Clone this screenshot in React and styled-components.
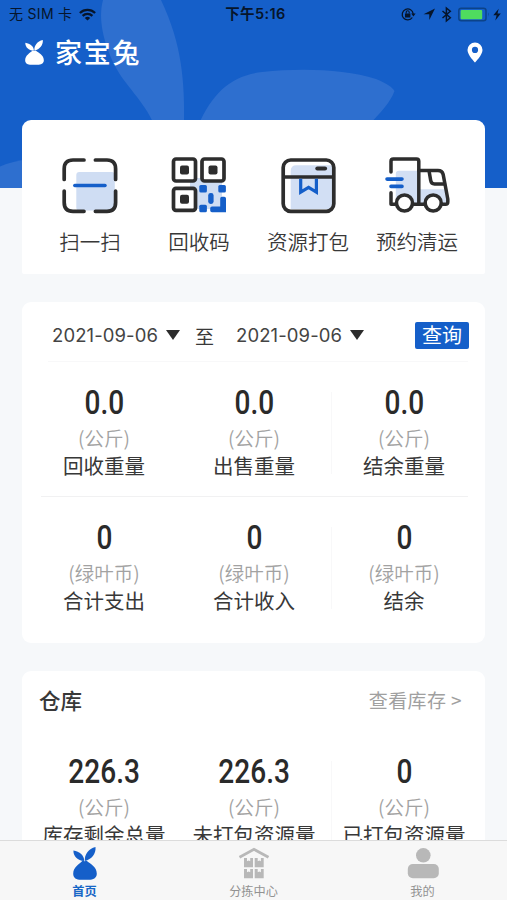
import styled, { createGlobalStyle } from 'styled-components';

const GlobalStyle = createGlobalStyle`
  * {
    box-sizing: border-box;
  }

  body {
    margin: 0;
    font-family: "Noto Sans CJK SC", sans-serif;
    color: #383838;
  }
`;

const Page = styled.div`
  display: flex;
  flex-direction: column;
  width: 507px;
  height: 900px;
  overflow: hidden;
  background: #f6f8fa;
`;

const Content = styled.main`
  flex: 1;
  min-height: 0;
  overflow: hidden;
`;

const Hero = styled.header`
  position: relative;
  height: 188px;
  background: #155fc9;
`;

const HeroLeaves = styled.svg`
  position: absolute;
  inset: 0;
`;

const StatusBar = styled.div`
  position: relative;
  display: grid;
  grid-template-columns: 1fr auto 1fr;
  align-items: center;
  height: 28px;
  padding: 0 5px 0 9px;
  font-family: Inter, "Noto Sans CJK SC", sans-serif;
  font-size: 14px;
  line-height: 20px;
  color: #06152b;
`;

const Carrier = styled.div`
  display: flex;
  align-items: center;
  gap: 7px;
  letter-spacing: 0.3px;
`;

const Clock = styled.div`
  font-size: 14.5px;
  font-weight: 600;
  letter-spacing: 0.4px;
`;

const StatusIcons = styled.svg`
  justify-self: end;
`;

const TitleBar = styled.div`
  position: relative;
  display: flex;
  align-items: center;
  height: 48px;
  padding: 0 24px 0 25px;
  color: #fff;
`;

const BrandName = styled.h1`
  flex: 1;
  margin: 0 0 0 11px;
  font-size: 27px;
  font-weight: 500;
  line-height: 32px;
  letter-spacing: 1.8px;
`;

const Cards = styled.div`
  position: relative;
  display: flex;
  flex-direction: column;
  gap: 28px;
  margin-top: -68px;
  padding: 0 22px;
`;

const Card = styled.section`
  flex-shrink: 0;
  height: ${({ $height }) => $height}px;
  padding: 0 7px;
  border-radius: ${({ $radius }) => $radius || '9px'};
  background: #fff;
`;

const Actions = styled.div`
  display: grid;
  grid-template-columns: repeat(4, 109px);
  justify-content: center;
  padding-top: 32px;
`;

const Action = styled.div`
  display: flex;
  flex-direction: column;
  align-items: center;
  gap: 8px;
  font-size: 20.5px;
  font-weight: 350;
  line-height: 30px;
`;

const FilterRow = styled.div`
  display: flex;
  align-items: center;
  height: 60px;
  margin: 0 10px 0 19px;
  padding: 7px 0 0 4px;
  border-bottom: 1px solid #f8f8f9;
  font-size: 19px;
`;

const DatePick = styled.span`
  display: flex;
  align-items: center;
  gap: 8px;
  width: 128px;
  font-family: Inter, sans-serif;
  font-size: 18.5px;
  letter-spacing: 0.1px;
  color: #444;
  white-space: nowrap;

  &::after {
    content: "";
    border: 7px solid transparent;
    border-top: 10px solid #2c2c2c;
    border-bottom: 0;
  }
`;

const DateText = styled.span`
  width: 106px;
`;

const Until = styled.span`
  margin: 0 22px 0 15px;
`;

const QueryButton = styled.button`
  width: 54px;
  height: 27px;
  margin: 0 -1px 0 auto;
  padding: 0;
  border: 0;
  border-radius: 2px;
  background: #155fc9;
  color: #fff;
  font: 20px/26px "Noto Sans CJK SC", sans-serif;
`;

const StatRow = styled.div`
  position: relative;
  display: grid;
  grid-template-columns: repeat(3, 150px);
  height: 135px;
  padding-top: 22px;
`;

const RowLine = styled.hr`
  height: 1px;
  margin: -1px 10px 0 12px;
  border: 0;
  background: #f1f1f2;
`;

const Stat = styled.div`
  display: flex;
  flex-direction: column;
  align-items: center;
  height: 94px;
  white-space: nowrap;

  &:last-child {
    background: linear-gradient(#f8f8f9, #f8f8f9) 2px 8px / 1px 82px no-repeat;
  }
`;

const StatValue = styled.strong`
  font-family: Roboto, sans-serif;
  font-size: 33px;
  font-weight: 550;
  line-height: 38px;
  color: #2a2a2a;
  transform: scaleX(0.85);
`;

const StatUnit = styled.span`
  font-size: 19.5px;
  font-weight: 350;
  line-height: 31px;
  color: #a2a2a2;
`;

const StatLabel = styled.span`
  font-size: 20.5px;
  line-height: 24px;
`;

const SectionHead = styled.div`
  display: flex;
  align-items: center;
  justify-content: space-between;
  height: 60px;
  margin: 0 10px;
  padding: 0 6px 3px 0;
`;

const SectionTitle = styled.h2`
  margin: 0;
  font-size: 21.5px;
  font-weight: 500;
`;

const MoreLink = styled.span`
  font-size: 19px;
  letter-spacing: 0.4px;
  color: #a0a0a0;
`;

const TabBar = styled.nav`
  display: grid;
  grid-template-columns: repeat(3, 1fr);
  height: 60px;
  border-top: 1px solid #dcdcdc;
  background: #f7f7f7;
`;

const Tab = styled.div`
  display: flex;
  flex-direction: column;
  align-items: center;
  justify-content: space-between;
  padding: 6px 0 0;
  font-size: 12.2px;
  font-weight: ${({ $active }) => ($active ? 700 : 400)};
  line-height: 17px;
  color: ${({ $active }) => ($active ? '#1767c6' : '#929292')};
`;

const Rabbit = ({ width, height, color }) => (
  <svg width={width} height={height} viewBox="0 0 24 33" preserveAspectRatio="none" fill={color}>
    <path d="M.4 3.5C6.5 4.600 11.4 8.5 11.2 14 4.5 13.5 .3 9.5 .4 3.5Z" />
    <path d="M22.5 0C23.2 6.5 18.5 12.5 11.9 14 11.2 7.5 15.5 1.7 22.5 0Z" />
    <path d="M9.5 13.8Q11.7 14.6 13.7 13.8C17 17 23.8 19.5 23.8 26.7 23.8 31 20 32.8 16 32.8H8C3.5 32.8 .2 31 .2 26.7 .2 20 6.5 17 9.5 13.8Z" />
  </svg>
);

const WifiIcon = () => (
  <svg width="17" height="13" viewBox="0 0 17 13" fill="none" stroke="currentColor" strokeWidth="2.3">
    <path d="M.9 5C5.2.9 11.8.9 16.1 5M3.6 7.8c2.8-2.6 7-2.6 9.8 0" />
    <path d="M8.5 12.6 5.8 9.9q2.7-2.1 5.4 0Z" fill="currentColor" stroke="none" />
  </svg>
);

const ScanIcon = () => (
  <svg width="66" height="66" viewBox="57 152 66 66" fill="none" strokeLinecap="round">
    <rect x="76.3" y="172" width="38.5" height="38.5" rx="3" fill="#cfddf3" />
    <path
      d="M84 160H73q-8.8 0-8.8 8.8V179.5M95.4 160H107q8.6 0 8.6 8.8V179.5M64.2 191V202.5q0 8.8 8.8 8.8H84M115.6 191V202.5q0 8.8-8.6 8.8H95.4"
      stroke="#2d2d2d"
      strokeWidth="3.7"
    />
    <path d="M74.8 185.6H105" stroke="#155fc9" strokeWidth="3.5" />
  </svg>
);

const CodeIcon = () => (
  <svg width="66" height="66" viewBox="166 152 66 66">
    <rect x="190" y="178" width="32" height="31" rx="4" fill="#cfddf3" />
    <g fill="#fff" stroke="#2d2d2d" strokeWidth="3.7">
      <rect x="173.5" y="159" width="22" height="22" rx="2.5" />
      <rect x="202" y="159" width="22" height="22" rx="2.5" />
      <rect x="173.5" y="188.3" width="22" height="22" rx="2.5" />
    </g>
    <g fill="#2d2d2d">
      <rect x="180" y="165.6" width="9" height="9" rx="2" />
      <rect x="208.5" y="165.6" width="9" height="9" rx="2" />
      <rect x="180" y="194.7" width="9" height="9" rx="2" />
    </g>
    <g fill="#155fc9">
      <rect x="199.3" y="185" width="7.6" height="7.6" rx="1.5" />
      <rect x="218.3" y="185" width="7.6" height="7.6" rx="1.5" />
      <rect x="208.2" y="193" width="5.4" height="11" rx="2.4" />
      <rect x="199.3" y="204.7" width="7.6" height="7.6" rx="1.5" />
      <path d="M222 196.7h2.2q1.8 0 1.8 1.8V212.3H212q-1.8 0-1.8-1.8v-2.2q0-1.8 1.8-1.8H220.2V198.5q0-1.8 1.8-1.8Z" />
    </g>
  </svg>
);

const PackageIcon = () => (
  <svg width="66" height="66" viewBox="275 152 66 66" fill="none">
    <path d="M290.7 209V171q0-5.7 5.7-5.7H332V209Z" fill="#d2dff4" />
    <rect x="283.2" y="160" width="50.6" height="51.3" rx="7.5" stroke="#2d2d2d" strokeWidth="3.7" />
    <path d="M283 177H334" stroke="#2d2d2d" strokeWidth="3.4" />
    <path d="M317.4 168.5H325" stroke="#2d2d2d" strokeWidth="4.2" strokeLinecap="round" />
    <path d="M300.7 178.7V192.2L308.6 187.4 316.4 192.2V178.7" stroke="#155fc9" strokeWidth="3.2" />
  </svg>
);

const TruckIcon = () => (
  <svg width="68" height="66" viewBox="383.5 152 68 66" fill="none" strokeLinecap="round" strokeLinejoin="round">
    <path d="M396.3 204V174q0-3.3 3.3-3.3H418V189.3H446L448 204Z" fill="#d2dff4" />
    <g stroke="#2d2d2d" strokeWidth="3.5">
      <path d="M391.5 172V161.3q0-2.3 2.3-2.3H417q2.3 0 2.3 2.3V204M391.5 192.7V204.3H396" />
      <path d="M419.3 170.5H438.5Q442.6 170.5 443.6 174.2L448.3 199V202Q448.3 204.3 446 204.3H443M414 204.3H425" />
      <path d="M429.6 171.2 431.2 180.5Q431.8 183.9 435 183.9H445" />
      <circle cx="405" cy="203" r="8" fill="#fff" />
      <circle cx="433.7" cy="203" r="8" fill="#fff" />
    </g>
    <path d="M387.5 179.1H402.5M391.5 186.4H402.5" stroke="#155fc9" strokeWidth="3.6" />
  </svg>
);

const WarehouseIcon = () => (
  <svg width="32" height="32" viewBox="238 847 32 32" fill="#b8b8b8">
    <path d="M239.5 857.3 254 849.4 268.5 857.3" fill="none" stroke="#b8b8b8" strokeWidth="2.7" />
    <path d="M244 858h3v3.3l1.6-.8 1.6.8V858h2.8v9.2h-9ZM254.7 858h3v3.3l1.6-.8 1.6.8V858h2.8v9.2h-9ZM244 869h3v3.3l1.6-.8 1.6.8V869h2.8v9.2h-9ZM254.7 869h3v3.3l1.6-.8 1.6.8V869h2.8v9.2h-9Z" />
  </svg>
);

const MineIcon = () => (
  <svg width="32" height="32" viewBox="0 0 32 32" fill="#b8b8b8">
    <circle cx="16.3" cy="8.3" r="7.3" />
    <rect x=".8" y="17" width="31" height="14.3" rx="5" />
  </svg>
);

const actions = [
  { label: '扫一扫', Icon: ScanIcon },
  { label: '回收码', Icon: CodeIcon },
  { label: '资源打包', Icon: PackageIcon },
  { label: '预约清运', Icon: TruckIcon },
];

const weights = [
  { value: '0.0', unit: '(公斤)', label: '回收重量' },
  { value: '0.0', unit: '(公斤)', label: '出售重量' },
  { value: '0.0', unit: '(公斤)', label: '结余重量' },
];

const coins = [
  { value: '0', unit: '(绿叶币)', label: '合计支出' },
  { value: '0', unit: '(绿叶币)', label: '合计收入' },
  { value: '0', unit: '(绿叶币)', label: '结余' },
];

const stock = [
  { value: '226.3', unit: '(公斤)', label: '库存剩余总量' },
  { value: '226.3', unit: '(公斤)', label: '未打包资源量' },
  { value: '0', unit: '(公斤)', label: '已打包资源量' },
];

const Stats = ({ items }) => (
  <StatRow>
    {items.map(({ value, unit, label }) => (
      <Stat key={label}>
        <StatValue>{value}</StatValue>
        <StatUnit>{unit}</StatUnit>
        <StatLabel>{label}</StatLabel>
      </Stat>
    ))}
  </StatRow>
);

const Header = () => (
  <Hero>
    <HeroLeaves width="507" height="188" viewBox="0 0 507 188" fill="#2e6fcf">
      <path d="M103 0C98 18 103 42 115 66 126 87 142 98 155 126H184C185 82 182 44 161 0Z" />
      <path d="M198 126C213 92 231 76 262 72 300 68 345 69 376 79 388 84 392 87 394.5 91 390 103 381 112 368 126Z" />
      <path d="M0 166.5Q12 161 30 159V188H0Z" />
    </HeroLeaves>
    <StatusBar>
      <Carrier>
        无 SIM 卡
        <WifiIcon />
      </Carrier>
      <Clock>下午5:16</Clock>
      <StatusIcons width="102" height="18" viewBox="400 4 102 18" fill="none" stroke="currentColor">
        <path d="M412.3 16.5A5.5 5.5 0 1 1 413.2 13" strokeWidth="1.3" />
        <path d="M411.2 12.6H415.6L413.4 15.5Z" fill="currentColor" stroke="none" />
        <rect x="405" y="12.5" width="5.4" height="4" fill="currentColor" stroke="none" />
        <path d="M406.2 12.5V11.3a1.5 1.5 0 0 1 3 0V12.5" strokeWidth="1.1" />
        <path d="M435 7.5 423.5 13.2H429.3V19Z" fill="currentColor" stroke="none" />
        <path d="M442.5 10 450.3 16.8 446.4 20V7L450.3 10.3 442.5 17" strokeWidth="1.5" />
        <rect x="458.8" y="7.3" width="27.2" height="12.5" rx="2.5" stroke="#0c4389" strokeWidth="1.5" />
        <rect x="460.6" y="9" width="21.6" height="9.2" rx="1" fill="#4fdc5f" stroke="none" />
        <path d="M488 11.3q1.8 2.2 0 4.5Z" fill="#0c4389" stroke="none" />
        <path d="M498.7 7.8 493.3 14.3H496.6L495.3 19.5 500.8 12.5H497.5Z" fill="currentColor" stroke="none" />
      </StatusIcons>
    </StatusBar>
    <TitleBar>
      <Rabbit width={19} height={25} color="#fff" />
      <BrandName>家宝兔</BrandName>
      <svg width="16" height="21" viewBox="0 0 16 21" fill="#fff">
        <path fillRule="evenodd" d="M8 .5A7.5 7.5 0 0 0 .5 8C.5 13 8 20.5 8 20.5S15.5 13 15.5 8A7.5 7.5 0 0 0 8 .5ZM8 4.8a3.1 3.1 0 1 1 0 6.2a3.1 3.1 0 0 1 0-6.2Z" />
      </svg>
    </TitleBar>
  </Hero>
);

const App = () => (
  <Page>
    <GlobalStyle />
    <Content>
      <Header />
      <Cards>
        <Card $height={154} $radius="9px 9px 2px 2px">
          <Actions>
            {actions.map(({ label, Icon }) => (
              <Action key={label}>
                <Icon />
                {label}
              </Action>
            ))}
          </Actions>
        </Card>
        <Card $height={341}>
          <FilterRow>
            <DatePick>
              <DateText>2021-09-06</DateText>
            </DatePick>
            <Until>至</Until>
            <DatePick>
              <DateText>2021-09-06</DateText>
            </DatePick>
            <QueryButton>查询</QueryButton>
          </FilterRow>
          <Stats items={weights} />
          <RowLine />
          <Stats items={coins} />
        </Card>
        <Card $height={240}>
          <SectionHead>
            <SectionTitle>仓库</SectionTitle>
            <MoreLink>查看库存 &gt;</MoreLink>
          </SectionHead>
          <Stats items={stock} />
        </Card>
      </Cards>
    </Content>
    <TabBar>
      <Tab $active>
        <Rabbit width={24} height={33} color="#155fc9" />
        首页
      </Tab>
      <Tab>
        <WarehouseIcon />
        分拣中心
      </Tab>
      <Tab>
        <MineIcon />
        我的
      </Tab>
    </TabBar>
  </Page>
);

export default App;
